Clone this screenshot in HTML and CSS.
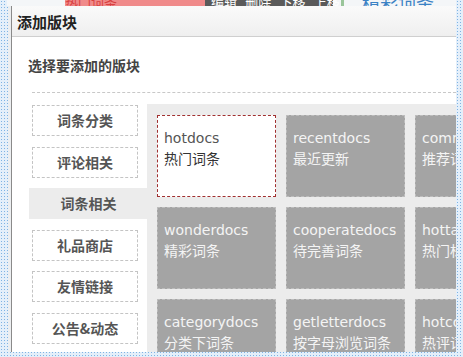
FILE: index.html
```html
<!DOCTYPE html>
<html lang="zh-CN">
<head>
    <meta charset="UTF-8">
    <title>添加版块</title>
    <link rel="stylesheet" href="styles.css">
</head>
<body>
    <!-- page behind the dialog -->
    <div class="page">
        <div class="top-strip">
            <span class="strip-pink">热门词条</span>
            <span class="strip-menu">编辑 &nbsp;删除 &nbsp;下移 &nbsp;上移</span>
            <span class="strip-sep"></span>
            <span class="strip-title">精彩词条</span>
        </div>
    </div>

    <!-- dialog -->
    <div class="dialog">
        <div class="dialog-head">添加版块</div>
        <div class="dialog-body">
            <h3 class="pick-title">选择要添加的版块</h3>
            <div class="picker">
                <ul class="nav">
                    <li class="nav-item">词条分类</li>
                    <li class="nav-item">评论相关</li>
                    <li class="nav-item active">词条相关</li>
                    <li class="nav-item">礼品商店</li>
                    <li class="nav-item">友情链接</li>
                    <li class="nav-item">公告&amp;动态</li>
                </ul>
                <div class="panel">
                    <div class="card selected"><span class="en">hotdocs</span><span class="cn">热门词条</span></div>
                    <div class="card"><span class="en">recentdocs</span><span class="cn">最近更新</span></div>
                    <div class="card"><span class="en">commenddocs</span><span class="cn">推荐词条</span></div>
                    <div class="card"><span class="en">wonderdocs</span><span class="cn">精彩词条</span></div>
                    <div class="card"><span class="en">cooperatedocs</span><span class="cn">待完善词条</span></div>
                    <div class="card"><span class="en">hottag</span><span class="cn">热门标签</span></div>
                    <div class="card"><span class="en">categorydocs</span><span class="cn">分类下词条</span></div>
                    <div class="card"><span class="en">getletterdocs</span><span class="cn">按字母浏览词条</span></div>
                    <div class="card"><span class="en">hotcomment</span><span class="cn">热评词条</span></div>
                </div>
            </div>
        </div>
    </div>
</body>
</html>
```

FILE: styles.css
```css
/* page with the blue dotted frame */
body {
    margin: 0;
    width: 463px;
    height: 357px;
    overflow: hidden;
    position: relative;
    font-family: "DejaVu Sans", "Noto Sans CJK SC", sans-serif;
    background-color: #e4effa;
    background-image: radial-gradient(#7fb3e3 0.8px, transparent 1px);
    background-size: 3px 3px;
}

.page {
    padding: 0 7px;
}

.top-strip {
    display: flex;
    align-items: flex-end;
    height: 6px;
    overflow: hidden;
    background: #f4f6f8;
    padding-left: 58px;
}

.top-strip span {
    display: block;
    height: 6px;
    font-size: 13px;
    line-height: 6px;
    white-space: nowrap;
}

.strip-pink {
    width: 140px;
    background: #f08a8a;
    color: #d84040;
}

.strip-menu {
    width: 128px;
    background: #5a5a5a;
    color: #fff;
    padding-left: 6px;
    box-sizing: border-box;
}

.strip-sep {
    width: 3px;
    margin: 0 8px 0 8px;
    background: #9ac59a;
}

.strip-title {
    color: #3b82c4;
    font-size: 18px !important;
    padding-left: 10px;
}

/* dialog box */
.dialog {
    position: absolute;
    left: 8px;
    top: 6px;
    width: 448px;
    height: 346px;
    overflow: hidden;
    background: #fff;
    border-left: 3px solid #eceef0;
    box-sizing: border-box;
}

.dialog::before {
    content: "";
    position: absolute;
    left: 0;
    top: 0;
    bottom: 0;
    border-left: 1px solid #8a8a8a;
}

.dialog-head {
    height: 30px;
    line-height: 31px;
    padding-left: 6px;
    font-family: "Noto Sans CJK SC", sans-serif;
    font-size: 15px;
    font-weight: bold;
    color: #222;
    background: linear-gradient(#fafafa, #efefef);
    border-bottom: 1px solid #cfcfcf;
}

.dialog-body {
    padding: 0 0 0 21px;
}

.pick-title {
    margin: 0;
    height: 55px;
    line-height: 56px;
    padding-left: -4px;
    margin-left: -4px;
    font-family: "Noto Sans CJK SC", sans-serif;
    font-size: 14px;
    font-weight: bold;
    color: #444;
    border-bottom: 1px dashed #c8c8c8;
    margin-left: 0;
    text-indent: -4px;
}

.picker {
    display: flex;
    margin-top: 11px;
}

.nav {
    list-style: none;
    margin: 0;
    padding: 0;
    width: 115px;
    display: flex;
    flex-direction: column;
    gap: 10.6px;
    padding-top: 1px;
}

.nav-item {
    width: 106px;
    height: 31px;
    box-sizing: border-box;
    border: 1px dashed #c4c4c4;
    text-align: center;
    line-height: 29px;
    font-family: "Noto Sans CJK SC", sans-serif;
    font-size: 14px;
    font-weight: bold;
    color: #555;
}

.nav-item.active {
    width: 119px;
    margin-left: -3px;
    border: none;
    line-height: 31px;
    background: #ececec;
}

/* block cards */
.panel {
    flex: 1;
    background: #ececec;
    display: grid;
    grid-template-columns: repeat(3, 119px);
    grid-auto-rows: 82px;
    gap: 10px;
    padding: 11px 0 0 10px;
    height: 260px;
}

.card {
    display: flex;
    flex-direction: column;
    padding: 12px 0 0 6px;
    box-sizing: border-box;
    background: #a4a4a4;
    border: 1px dashed #bdbdbd;
    color: #f4f4f4;
    font-size: 14px;
    line-height: 20px;
    white-space: nowrap;
    overflow: hidden;
}

.card .cn {
    font-family: "Noto Sans CJK SC", sans-serif;
}

.card.selected {
    background: #fff;
    border-color: #a03030;
    color: #555;
}

.card.selected .cn {
    color: #333;
}
```
